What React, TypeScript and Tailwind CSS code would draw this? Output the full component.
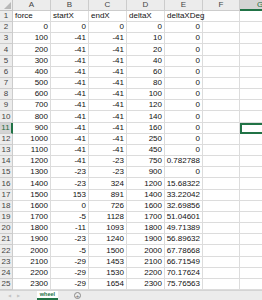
import React from "react";

const rows: (string | number)[][] = [
  ["force", "startX", "endX", "deltaX", "deltaXDeg"],
  [0, 0, 0, 0, 0],
  [100, -41, -41, 10, 0],
  [200, -41, -41, 20, 0],
  [300, -41, -41, 40, 0],
  [400, -41, -41, 60, 0],
  [500, -41, -41, 80, 0],
  [600, -41, -41, 100, 0],
  [700, -41, -41, 120, 0],
  [800, -41, -41, 140, 0],
  [900, -41, -41, 160, 0],
  [1000, -41, -41, 250, 0],
  [1100, -41, -41, 450, 0],
  [1200, -41, -23, 750, "0.782788"],
  [1300, -23, -23, 900, 0],
  [1400, -23, 324, 1200, "15.68322"],
  [1500, 153, 891, 1400, "33.22042"],
  [1600, 0, 726, 1600, "32.69856"],
  [1700, -5, 1128, 1700, "51.04601"],
  [1800, -11, 1093, 1800, "49.71389"],
  [1900, -23, 1240, 1900, "56.89632"],
  [2000, -5, 1500, 2000, "67.78668"],
  [2100, -29, 1453, 2100, "66.71549"],
  [2200, -29, 1530, 2200, "70.17624"],
  [2300, -29, 1654, 2300, "75.76563"],
];

const tall = new Set([4, 10, 16, 22]);
const cols = ["A", "B", "C", "D", "E", "F", "G"];

export default function App() {
  return (
    <div
      className="w-[262px] h-[300px] overflow-hidden bg-white flex flex-col text-[8px] leading-none text-[#111111]"
      style={{ fontFamily: '"Liberation Sans", Arial, sans-serif' }}
    >
      <div className="flex-1 overflow-hidden">
        <div className="grid grid-cols-[13px_38px_38px_38px_38px_38px_37px_40px] w-[280px]">
          {/* header row */}
          <div className="h-[11px] bg-[#ececec] border-r border-b border-[#c4c4c4] relative">
            <div className="absolute right-[1px] bottom-[1px] w-0 h-0 border-l-[7px] border-l-transparent border-b-[7px] border-b-[#b8b8b8]" />
          </div>
          {cols.map((c) =>
            c === "G" ? (
              <div
                key={c}
                className="h-[11px] bg-[#d4d4d4] border-b-2 border-[#217346] flex items-center justify-center text-[#1e6b3e]"
              >
                {c}
              </div>
            ) : (
              <div
                key={c}
                className="h-[11px] bg-[#ececec] border-r border-b border-[#cccccc] flex items-center justify-center text-[#444444]"
              >
                {c}
              </div>
            )
          )}
          {rows.map((r, i) => {
            const n = i + 1;
            const h = tall.has(n) ? "h-[12px]" : "h-[11px]";
            const sel = n === 11;
            return (
              <React.Fragment key={n}>
                <div
                  className={`${h} border-r border-b border-[#cccccc] flex items-center justify-center ${
                    sel ? "bg-[#d4d4d4] text-[#1e6b3e] border-r-2 border-r-[#217346]" : "bg-[#ececec] text-[#444444]"
                  }`}
                >
                  {n}
                </div>
                {r.map((v, j) => {
                  const isText = typeof v === "string" && isNaN(Number(v));
                  return (
                    <div
                      key={j}
                      className={`${h} border-r border-b border-[#dcdcdc] flex items-center overflow-visible whitespace-nowrap ${
                        isText ? "justify-start pl-[2px]" : "justify-end pr-[2px]"
                      }`}
                    >
                      {v}
                    </div>
                  );
                })}
                <div className={`${h} border-r border-b border-[#dcdcdc]`} />
                {sel ? (
                  <div className={`${h} border-2 border-[#217346] box-border`} />
                ) : (
                  <div className={`${h} border-b border-[#dcdcdc]`} />
                )}
              </React.Fragment>
            );
          })}
        </div>
      </div>
      <div className="h-[10px] bg-[#ececec] border-t border-[#d4d4d4] flex items-stretch shrink-0">
        <div className="w-[37px] flex items-center gap-[6px] pl-[8px] text-[#c4c4c4] text-[4px] leading-none">
          <span>◀</span>
          <span>▶</span>
        </div>
        <div className="w-[21px] bg-white flex items-center justify-center text-[#217346] text-[5.5px] font-bold border-b-2 border-[#217346] leading-none">
          wheel
        </div>
        <div className="ml-[16px] flex items-center">
          <div className="w-[7px] h-[7px] rounded-full border border-[#8a8a8a] flex items-center justify-center text-[#6a6a6a] text-[6px] leading-none">
            +
          </div>
        </div>
      </div>
    </div>
  );
}
